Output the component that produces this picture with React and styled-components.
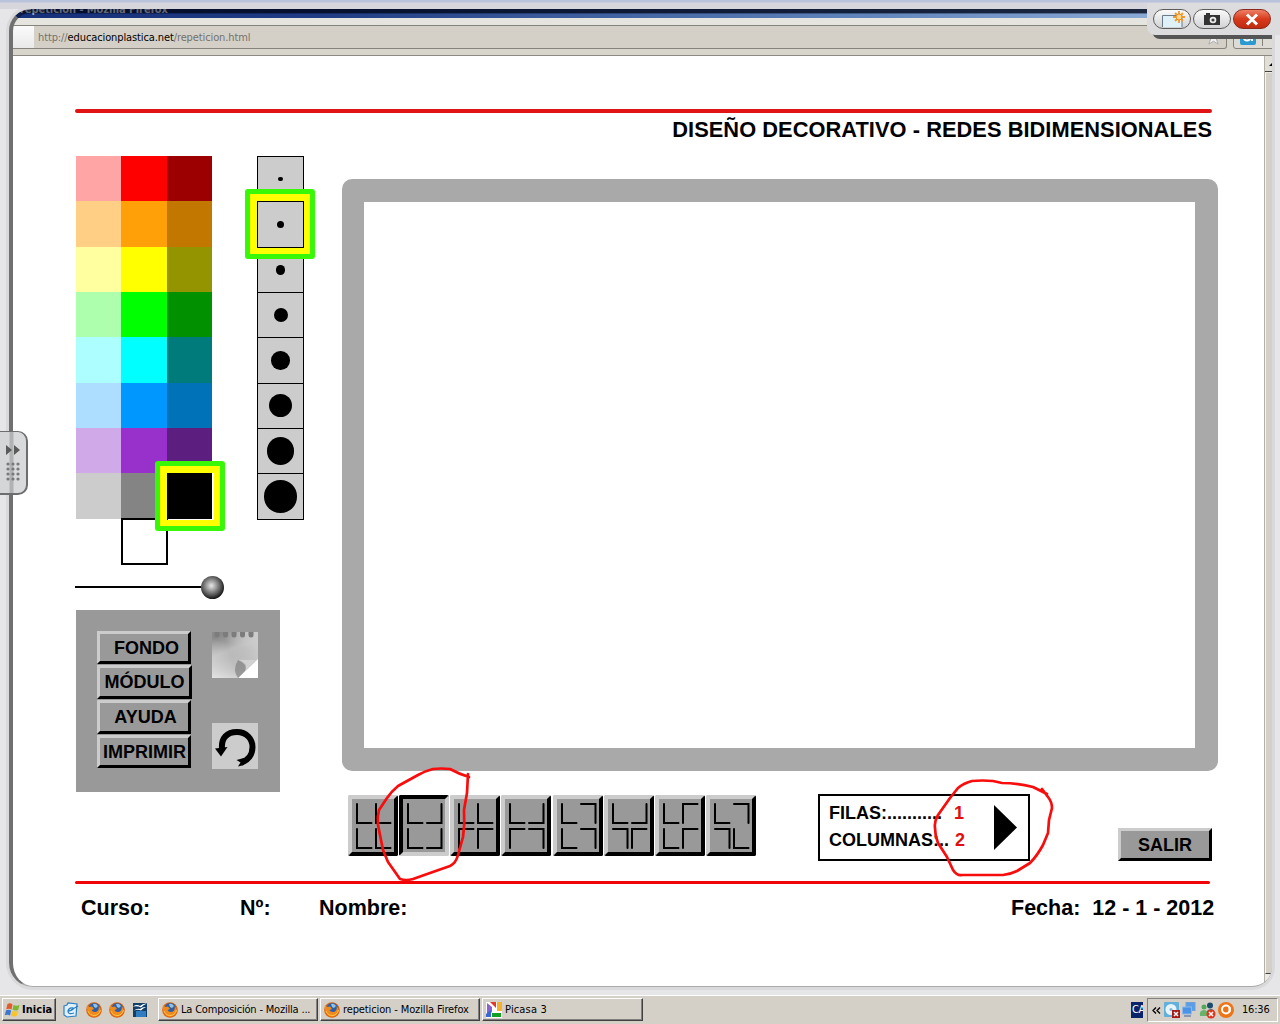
import React from "react";
import styled, { createGlobalStyle } from "styled-components";

const GlobalStyle = createGlobalStyle`
  * {
    box-sizing: border-box;
  }
  body {
    margin: 0;
    width: 1280px;
    height: 1024px;
    overflow: hidden;
    background: #fff;
  }
  button {
    padding: 0;
    margin: 0;
    font: inherit;
  }
`;

const arial = `"Liberation Sans", Arial, sans-serif`;
const tahoma = `"DejaVu Sans Condensed", Tahoma, sans-serif`;

const Desktop = styled.div`
  position: relative;
  display: flex;
  flex-direction: column;
  width: 1280px;
  height: 1024px;
  overflow: hidden;
  background: #fff;
`;

/* ---------- browser ---------- */

const Browser = styled.div`
  position: relative;
  display: flex;
  flex-direction: column;
  height: 995px;
  overflow: hidden;
`;

const TitleBar = styled.div`
  height: 18px;
  flex: none;
  padding-left: 20px;
  background: linear-gradient(rgba(0, 8, 30, 0.65) 0 13px, transparent 14px),
    linear-gradient(90deg, #16307a 0%, #1f3c84 25%, #5c80b8 65%, #9dbbe2 100%);
  color: #a4aaba;
  font: bold 11px/19px ${tahoma};
  letter-spacing: -0.06px;
  white-space: nowrap;
`;

const AddressBar = styled.div`
  display: flex;
  align-items: center;
  flex: none;
  height: 38px;
  padding: 7px 0 7px 13px;
  background: linear-gradient(#e6e4de 0 7px, #d8d5cd 7px);
  border-bottom: 1px solid #8b8982;
`;

const PageTab = styled.div`
  width: 21px;
  height: 24px;
  background: linear-gradient(#fbfbfb, #e9e9e9);
  border-top: 1px solid #85847c;
  border-bottom: 1px solid #85847c;
`;

const UrlField = styled.div`
  display: flex;
  align-items: center;
  justify-content: space-between;
  width: 1193px;
  height: 24px;
  padding: 2px 5px 0 4px;
  background: #d4d0c8;
  border: 1px solid #85847c;
  border-left: 0;
  border-radius: 0 3px 3px 0;
  color: #74726c;
  font: 11px/22px ${tahoma};
  letter-spacing: -0.11px;

  b {
    color: #000;
    font-weight: normal;
  }
`;

const SearchField = styled.div`
  display: flex;
  align-items: center;
  width: 47px;
  height: 24px;
  margin-left: 6px;
  padding-left: 6px;
  background: #dedbd4;
  border: 1px solid #85847c;
  border-radius: 3px;
`;

const Viewport = styled.div`
  display: flex;
  flex: 1;
`;

const Scrollbar = styled.div`
  display: flex;
  flex-direction: column;
  width: 16px;
  height: 931px;
  background: #eceae5;
  border-left: 1px solid #b4b1a9;
`;

const ScrollArrow = styled.div`
  display: flex;
  align-items: center;
  justify-content: center;
  height: 16px;
  background: #e2dfd8;
  border-bottom: 1px solid #404040;
`;

const ScrollThumb = styled.div`
  height: 901px;
  margin-top: 1px;
  background: #d4d0c8;
  border-left: 1px solid #f6f5f2;
  border-bottom: 1px solid #404040;
`;

/* ---------- activity page ---------- */

const Stage = styled.main`
  display: flex;
  flex-direction: column;
  width: 1264px;
  padding: 53px 46px 0 75px;
  font-family: ${arial};
  font-weight: bold;
  color: #000;
`;

const RedLine = styled.hr`
  flex: none;
  width: ${(p) => p.$width}px;
  height: ${(p) => p.$height}px;
  margin: 0;
  border: 0;
  border-radius: 2px;
  background: ${(p) => p.$color};
`;

const Heading = styled.h1`
  width: 1137px;
  height: 43px;
  margin: 0;
  padding-top: 3px;
  font-size: 21.8px;
  line-height: 27px;
  letter-spacing: 0.06px;
  text-align: right;
  white-space: nowrap;
`;

const Workspace = styled.div`
  display: flex;
  height: 725px;
`;

const ToolsColumn = styled.div`
  width: 267px;
  padding-left: 1px;
`;

const Pickers = styled.div`
  display: flex;
  height: 409px;
`;

const Palette = styled.div`
  display: grid;
  grid-template-columns: repeat(3, 45.35px);
  grid-template-rows: repeat(8, 45.35px) 46px;
  width: 181px;
`;

const Swatch = styled.div`
  position: relative;
  background: ${(p) => p.$color};
`;

const WhiteSwatch = styled.div`
  position: relative;
  grid-column: 2;
  width: 47px;
  height: 47px;
  margin: -1px 0 0 -0.6px;
  background: #fff;
  border: 2px solid #000;
`;

const Selection = styled.div`
  position: absolute;
  left: ${(p) => p.$offset}px;
  top: ${(p) => p.$offset}px;
  width: 70px;
  height: 70px;
  border: 5px solid #38f808;
  border-radius: 3px;
  box-shadow: inset 7px 7px #ff0, inset -6px -6px #ff0;
  z-index: 1;
`;

const BrushColumn = styled.div`
  width: 47px;
`;

const Brush = styled.div`
  position: relative;
  display: flex;
  align-items: center;
  justify-content: center;
  width: 47px;
  height: 46.35px;
  margin-bottom: -1px;
  background: #ccc;
  border: 1px solid #000;
`;

const Dot = styled.span`
  width: ${(p) => p.$size}px;
  height: ${(p) => p.$size}px;
  border-radius: 50%;
  background: #000;
`;

const Slider = styled.div`
  display: flex;
  align-items: center;
  height: 45px;
  margin-left: -1px;
  padding-bottom: 1px;
`;

const Track = styled.div`
  width: 126px;
  height: 2px;
  background: #000;
`;

const Knob = styled.div`
  width: 23px;
  height: 23px;
  border-radius: 50%;
  background: radial-gradient(circle at 45% 42%, #e8e8e8 0, #999 28%, #555 52%, #111 74%);
`;

const Panel = styled.div`
  display: flex;
  gap: 20px;
  width: 204px;
  height: 182px;
  padding: 21px 0 0 21px;
  background: #999;
`;

const Stack = styled.div`
  display: flex;
  flex-direction: column;
  gap: 1px;
  width: 95px;
`;

const ToolIcons = styled.div`
  display: flex;
  flex-direction: column;
  gap: 45px;
  padding-top: 1px;
`;

const BevelButton = styled.button`
  width: ${(p) => p.$width || 94}px;
  height: ${(p) => p.$height || 34}px;
  padding-left: ${(p) => p.$indent || 0}px;
  background: #999;
  border: 3px solid;
  border-color: #ccc #000 #000 #ccc;
  font-size: 18px;
  line-height: 26px;
  color: #000;
  text-align: center;
  white-space: nowrap;
`;

const BoardColumn = styled.div`
  display: flex;
  flex-direction: column;
  width: 876px;
  padding-top: 23px;
`;

const Board = styled.div`
  flex: none;
  width: 876px;
  height: 592px;
  background: #fff;
  border: 22px solid #a9a9a9;
  border-top-width: 23px;
  border-right-width: 23px;
  border-bottom-width: 23px;
  border-radius: 10px;
`;

const Controls = styled.div`
  display: flex;
  align-items: flex-start;
  padding: 23px 0 0 6px;
`;

const Patterns = styled.div`
  display: flex;
  gap: 1.15px;
  width: 470px;
  padding-top: 1px;
`;

const PatternButton = styled.button`
  width: 50px;
  height: 61px;
  background: #999;
  border: 4px solid;
  border-color: ${(p) => (p.$pressed ? "#000 #ccc #ccc #000" : "#ccc #000 #000 #ccc")};
  border-radius: 2px;

  svg {
    display: block;
    margin: -4px;
  }
`;

const Counter = styled.div`
  display: flex;
  align-items: center;
  justify-content: space-between;
  width: 212px;
  height: 67px;
  padding: 0 11px 0 9px;
  border: 2px solid #000;
`;

const CounterTable = styled.div`
  display: grid;
  grid-template-columns: 125px 14px;
  row-gap: 1px;
  padding-bottom: 2px;
  font-size: 18px;
  line-height: 26px;
  white-space: nowrap;
`;

const Count = styled.span`
  padding-left: ${(p) => p.$indent || 0}px;
  color: #e01010;
`;

const ExitSlot = styled.div`
  margin-left: 88px;
  padding-top: 34px;
`;

const Footer = styled.footer`
  display: flex;
  padding: 10px 0 0 6px;
  font-size: 21.5px;
  line-height: 28px;
  white-space: pre;
`;

const Field = styled.span`
  width: ${(p) => p.$width}px;
`;

/* ---------- capture frame ---------- */

const Frame = styled.div`
  position: absolute;
  left: 9px;
  top: 9px;
  width: 1263px;
  height: 978px;
  border: 0 solid;
  border-top: 4px solid rgba(0, 4, 20, 0.4);
  border-left: 4px solid #707070;
  border-bottom: 1px solid #aaa;
  border-radius: 22px 4px 20px 24px;
  box-shadow: 0 0 0 3px #d9d9dc, 0 0 0 40px #e6e6e8;
  pointer-events: none;
`;

const FrameTop = styled.div`
  position: absolute;
  left: 0;
  top: 0;
  width: 1280px;
  height: 9px;
  background: linear-gradient(#b9c4dc 0 2px, #d6d6dc 3px);
`;

const CaptureShadow = styled.div`
  position: absolute;
  left: 1152px;
  top: 30px;
  width: 120px;
  height: 9px;
  background: #555;
  border-radius: 0 4px 0 8px;
`;

const CaptureBar = styled.div`
  position: absolute;
  left: 1147px;
  top: 3px;
  display: flex;
  gap: 2px;
  width: 133px;
  height: 32px;
  padding: 6px 0 0 6px;
  background: #dcdcde;
  border-radius: 0 0 0 8px;
`;

const Pill = styled.button`
  display: flex;
  align-items: center;
  justify-content: center;
  width: 38px;
  height: 20px;
  background: ${(p) =>
    p.$danger ? "linear-gradient(#ee8066, #d83a1c 50%, #c02a10)" : "linear-gradient(#fafafa, #d2d2d6)"};
  border: 1px solid ${(p) => (p.$danger ? "#8a2a1c" : "#5c5c5c")};
  border-radius: 10px;
`;

const Handle = styled.div`
  position: absolute;
  left: -2px;
  top: 431px;
  display: flex;
  flex-direction: column;
  align-items: center;
  gap: 7px;
  width: 30px;
  height: 64px;
  padding-top: 13px;
  background: linear-gradient(90deg, #d4d6d7 0 10px, #b0b2b3 11px 14px, #d8dadb 15px);
  border: 1px solid #6c6e70;
  border-width: 1px 2px 2px 1px;
  border-radius: 0 10px 10px 0;
`;

const Ink = styled.svg`
  position: absolute;
  left: 0;
  top: 0;
  pointer-events: none;
`;

/* ---------- taskbar ---------- */

const Taskbar = styled.div`
  display: flex;
  align-items: flex-start;
  height: 29px;
  padding: 2px 2px 0;
  background: #d4d0c8;
  border-top: 1px solid #fff;
  font: 11px/20px ${tahoma};
  color: #000;
  white-space: nowrap;
`;

const StartButton = styled.button`
  display: flex;
  align-items: center;
  gap: 1px;
  width: 54px;
  height: 23px;
  padding-left: 1px;
  background: #d4d0c8;
  border: 1px solid;
  border-color: #fff #404040 #404040 #fff;
  box-shadow: inset -1px -1px #808080;
  font-weight: bold;
  letter-spacing: 0.05px;
`;

const QuickLaunch = styled.div`
  display: flex;
  align-items: center;
  gap: 7px;
  width: 102px;
  height: 23px;
  padding-left: 7px;
`;

const Task = styled.div`
  display: flex;
  align-items: center;
  gap: 3px;
  width: ${(p) => p.$width}px;
  height: 23px;
  margin-right: 2px;
  padding-left: 3px;
  border: 1px solid;
  border-color: #fff #404040 #404040 #fff;
  box-shadow: inset -1px -1px #808080;
  letter-spacing: ${(p) => p.$spacing}px;
`;

const Language = styled.div`
  width: 12px;
  height: 16px;
  margin: 4px 4px 0 auto;
  padding-left: 1px;
  overflow: hidden;
  background: #0a246a;
  color: #fff;
  line-height: 16px;
  letter-spacing: -0.5px;
`;

const Tray = styled.div`
  display: flex;
  align-items: center;
  gap: 2px;
  width: 131px;
  height: 24px;
  padding-left: 4px;
  border: 1px solid;
  border-color: #808080 #fff #fff #808080;
`;

const Clock = styled.span`
  margin-left: 5px;
  letter-spacing: -0.2px;
`;

const colors = [
  "#ffa5a5", "#ff0000", "#9c0000",
  "#ffcf85", "#ffa008", "#c27800",
  "#ffffa0", "#ffff00", "#949400",
  "#adffad", "#00ff00", "#009000",
  "#adffff", "#00ffff", "#007b7b",
  "#addeff", "#0098ff", "#0073b8",
  "#d0a9e8", "#9830cc", "#5c1f80",
  "#cccccc", "#848484", "#000000",
];

const brushes = [4.5, 7, 9.5, 14, 18.5, 23, 27.5, 32.5];

// four corners per pattern, reading order; each name is the place of the angle
const patterns = [
  ["bl", "bl", "bl", "bl"],
  ["bl", "br", "bl", "br"],
  ["bl", "bl", "tl", "tl"],
  ["bl", "br", "tl", "tr"],
  ["bl", "tr", "bl", "tr"],
  ["bl", "br", "tr", "tl"],
  ["bl", "tl", "bl", "tl"],
  ["bl", "tr", "tr", "bl"],
];

const corners = {
  bl: "M0 0V19H14.5",
  br: "M14.5 0V19H0",
  tl: "M0 19V0H14.5",
  tr: "M14.5 19V0H0",
};

const cells = [
  [9, 9],
  [28, 9],
  [9, 34],
  [28, 34],
];

function PatternIcon({ pattern }) {
  return (
    <svg width="50" height="61" fill="none" stroke="#000" strokeWidth="2" strokeLinecap="round">
      {pattern.map((corner, i) => (
        <path key={i} d={corners[corner]} transform={`translate(${cells[i][0]} ${cells[i][1]})`} />
      ))}
    </svg>
  );
}

function NotebookIcon() {
  return (
    <svg width="46" height="46" viewBox="0 0 46 46">
      <defs>
        <linearGradient id="sheet" x1="0.35" y1="0" x2="0.75" y2="1">
          <stop offset="0" stopColor="#8a8a8a" />
          <stop offset="0.35" stopColor="#b0b0b0" />
          <stop offset="0.8" stopColor="#858585" />
        </linearGradient>
        <linearGradient id="low" x1="0.3" y1="0" x2="0" y2="1">
          <stop offset="0.2" stopColor="#eee" stopOpacity="0" />
          <stop offset="1" stopColor="#e4e4e4" />
        </linearGradient>
        <linearGradient id="side" x1="0.4" y1="0.5" x2="1" y2="0.3">
          <stop offset="0" stopColor="#ddd" stopOpacity="0" />
          <stop offset="1" stopColor="#ccc" />
        </linearGradient>
      </defs>
      <path d="M0 0H46V28L26 46H0Z" fill="url(#sheet)" />
      <path d="M0 0H46V28L26 46H0Z" fill="url(#low)" />
      <path d="M0 0H46V28L26 46H0Z" fill="url(#side)" />
      {[5, 13.500, 22, 30.500, 39].map((x) => (
        <path key={x} d={`M${x - 2.5} 0V3A2.5 2.5 0 0 0 ${x + 2.5} 3V0Z`} fill="#7c7c7c" />
      ))}
      <path d="M26 46L46 27V46Z" fill="#fff" />
      <path d="M26 28Q36 30 34 38L44 28Z" fill="#d2d2d2" />
      <path d="M26 28Q36 32 33 39L26 46Q20 38 26 28Z" fill="#777" opacity="0.6" />
    </svg>
  );
}

function UndoIcon() {
  return (
    <svg width="46" height="46" viewBox="0 0 46 46">
      <rect width="46" height="46" fill="#ccc" />
      <path d="M10 26C9 15 15 9 25 9C34.500 9 40.500 16 40.500 24C40.500 32 36 37.500 29 39.500" fill="none" stroke="#000" strokeWidth="6" />
      <path d="M3 25.500L15.500 24L9 33.500Z" />
      <path d="M24.500 37L32 35L32 42L26 43.500L28.500 39.500Z" />
    </svg>
  );
}

function FirefoxIcon() {
  return (
    <svg width="16" height="16" viewBox="0 0 16 16">
      <circle cx="8" cy="8" r="7.800" fill="#d9620c" />
      <circle cx="8.300" cy="6.500" r="5.600" fill="#2d5fa8" />
      <path d="M7 2Q10 1 12 4L10 6L8 5Z" fill="#8fc4e8" />
      <path d="M1 3L3 5L6 4.500L8 7L5.500 8Q7 11 11 9.500Q13.500 8 12.500 4Q17 9 12.500 13Q8 16.500 3.500 13Q0 9 1 3Z" fill="#f08a1c" />
      <path d="M2 9Q4 14 9 13.500Q13 13 14.500 8" fill="none" stroke="#fbc24a" strokeWidth="1" />
    </svg>
  );
}

function WindowsIcon() {
  return (
    <svg width="17" height="16" viewBox="0 0 16 16">
      <path d="M3 2Q6 .5 8 2.500L7 7.500Q4.500 6 1.700 7.200Z" fill="#e8592a" />
      <path d="M9 3Q12 4.500 15 3L13.700 8Q11 9.200 8 7.800Z" fill="#7cb82f" />
      <path d="M1.500 8.200Q4.500 7 6.700 8.500L5.500 13.500Q3 12 .3 13.200Z" fill="#3a78d8" />
      <path d="M7.700 8.800Q10.500 10 13.500 9L12.200 14Q9.500 15.200 6.500 13.800Z" fill="#f6c42c" />
    </svg>
  );
}

function DesktopIcon() {
  return (
    <svg width="16" height="16" viewBox="0 0 16 16">
      <path d="M1 4L4 3L5 1L14 2L13 14L4 15L1 13Z" fill="#e4f1fb" stroke="#2a80c4" strokeWidth="1.200" />
      <path d="M11 11Q5 13 5 9Q6 5 10 6Q11 8 5.500 9" fill="none" stroke="#2a80c4" strokeWidth="1.300" />
      <path d="M8 8L15 4" stroke="#2a80c4" strokeWidth="1.300" />
    </svg>
  );
}

function WriterIcon() {
  return (
    <svg width="16" height="16" viewBox="0 0 16 16">
      <path d="M1 1H15V15H1Z" fill="#123f68" />
      <path d="M4 9H14V15H4Z" fill="#2f7cc0" />
      <path d="M1 4.500Q5 2 8 4Q11 1 15 1.500Q11 3 9 5.500Q6 3.500 1 4.500ZM2 8.500Q5 6 8 7Q11 4.500 14 5Q11 6 9 8.500Q6 7 2 8.500Z" fill="#fff" />
    </svg>
  );
}

function PicasaIcon() {
  return (
    <svg width="16" height="16" viewBox="0 0 16 16">
      <rect width="16" height="16" fill="#fff" />
      <path d="M1 1L6 5V10L1 14Z" fill="#8a62d0" />
      <path d="M4 0H10V6Z" fill="#e23a2a" />
      <path d="M11 0H16V9H11Z" fill="#f6b02c" />
      <path d="M6 11H15V15H6Z" fill="#14a024" />
      <path d="M0 15V12L5 8V15Z" fill="#3868d0" />
    </svg>
  );
}

function TrayIcons() {
  return (
    <svg width="72" height="18" viewBox="0 0 72 18">
      <rect x="1" y="1" width="15" height="15" rx="1" fill="#62b0dc" />
      <circle cx="8" cy="8.500" r="5.500" fill="#e8f4fa" />
      <circle cx="8" cy="8.500" r="1.500" fill="#77b4d4" />
      <path d="M9 9H17V17H9Z" fill="#a81818" />
      <path d="M11 11L15 15M15 11L11 15" stroke="#fff" strokeWidth="1.500" />
      <rect x="23" y="1.500" width="9" height="8" fill="#5a9ee8" stroke="#6f9fd8" />
      <rect x="19.500" y="6" width="9" height="7" fill="#4a94e8" stroke="#8fb8e4" />
      <path d="M21 14H28V16H21Z" fill="#8898b4" />
      <circle cx="47" cy="4.500" r="3" fill="#1c4c6c" />
      <path d="M43 15Q43 8 48 8Q52 8 52 14Z" fill="#287098" />
      <circle cx="41" cy="6" r="2.500" fill="#52a858" />
      <path d="M37 15Q36 9 41 9Q45 9 45 15Z" fill="#64b46a" />
      <circle cx="48" cy="13" r="4.500" fill="#dc3820" />
      <path d="M46 11L50 15M50 11L46 15" stroke="#fff" strokeWidth="1.500" />
      <circle cx="63" cy="9" r="8" fill="#ee7516" />
      <circle cx="63" cy="8.500" r="4" fill="none" stroke="#fff" strokeWidth="2" />
      <path d="M66.500 6V11" stroke="#fff" strokeWidth="2" />
    </svg>
  );
}

function App() {
  return (
    <Desktop>
      <GlobalStyle />
      <Browser>
        <TitleBar>repeticion - Mozilla Firefox</TitleBar>
        <AddressBar>
          <PageTab />
          <UrlField>
            <span>
              http://<b>educacionplastica.net</b>/repeticion.html
            </span>
            <svg width="15" height="15" viewBox="0 0 16 16">
              <path d="M8 1L10 6L15 6L11 9.500L13 15L8 12L3 15L5 9.500L1 6L6 6Z" fill="#f2f2f2" stroke="#aaa" />
            </svg>
          </UrlField>
          <SearchField>
            <svg width="36" height="18" viewBox="0 0 36 18">
              <rect width="16" height="16" y="1" rx="2" fill="#2a9ad0" />
              <circle cx="7" cy="9" r="3.500" fill="none" stroke="#fff" strokeWidth="2" />
              <path d="M12 4V13" stroke="#fff" strokeWidth="2" />
              <path d="M22.500 0V18" stroke="#85847c" />
              <path d="M27 4H33L30 7Z" />
            </svg>
          </SearchField>
        </AddressBar>
        <Viewport>
          <Stage>
            <RedLine $width={1137} $height={4} $color="#e01414" />
            <Heading>DISEÑO DECORATIVO - REDES BIDIMENSIONALES</Heading>
            <Workspace>
              <ToolsColumn>
                <Pickers>
                  <Palette>
                    {colors.map((c, i) => (
                      <Swatch key={c} $color={c}>
                        {i === 23 && <Selection $offset={-12} />}
                      </Swatch>
                    ))}
                    <WhiteSwatch />
                  </Palette>
                  <BrushColumn>
                    {brushes.map((size, i) => (
                      <Brush key={size}>
                        <Dot $size={size} />
                        {i === 1 && <Selection $offset={-13} />}
                      </Brush>
                    ))}
                  </BrushColumn>
                </Pickers>
                <Slider>
                  <Track />
                  <Knob />
                </Slider>
                <Panel>
                  <Stack>
                    <BevelButton $height={33} $indent={5}>FONDO</BevelButton>
                    <BevelButton $width={95}>MÓDULO</BevelButton>
                    <BevelButton $indent={3}>AYUDA</BevelButton>
                    <BevelButton $height={33} $indent={1}>IMPRIMIR</BevelButton>
                  </Stack>
                  <ToolIcons>
                    <NotebookIcon />
                    <UndoIcon />
                  </ToolIcons>
                </Panel>
              </ToolsColumn>
              <BoardColumn>
                <Board />
                <Controls>
                  <Patterns>
                    {patterns.map((pattern, i) => (
                      <PatternButton key={i} $pressed={i === 1}>
                        <PatternIcon pattern={pattern} />
                      </PatternButton>
                    ))}
                  </Patterns>
                  <Counter>
                    <CounterTable>
                      <span>FILAS:...........</span>
                      <Count>1</Count>
                      <span>COLUMNAS:..</span>
                      <Count $indent={1}>2</Count>
                    </CounterTable>
                    <svg width="23" height="45">
                      <path d="M0 0L23 22.500L0 45Z" />
                    </svg>
                  </Counter>
                  <ExitSlot>
                    <BevelButton $height={33}>SALIR</BevelButton>
                  </ExitSlot>
                </Controls>
              </BoardColumn>
            </Workspace>
            <RedLine $width={1135} $height={3} $color="#f00408" />
            <Footer>
              <Field $width={159}>Curso:</Field>
              <Field $width={79}>Nº:</Field>
              <Field $width={692}>Nombre:</Field>
              <Field>Fecha:  12 - 1 - 2012</Field>
            </Footer>
          </Stage>
          <Scrollbar>
            <ScrollArrow>
              <svg width="8" height="4">
                <path d="M0 4L4 0L8 4Z" />
              </svg>
            </ScrollArrow>
            <ScrollThumb />
          </Scrollbar>
        </Viewport>
        <Frame />
        <FrameTop />
        <CaptureShadow />
        <CaptureBar>
          <Pill>
            <svg width="28" height="18" viewBox="0 0 28 18">
              <path d="M4.500 17V5.500H24V17" fill="#dff1f8" stroke="#6a7a88" />
              <path d="M21 1V13M15 7H27M17 3L25 11M25 3L17 11" stroke="#f09a30" strokeWidth="1.800" />
              <circle cx="21" cy="7" r="3" fill="#ffd98a" stroke="#ee8a20" />
            </svg>
          </Pill>
          <Pill>
            <svg width="16" height="12" viewBox="0 0 16 12">
              <path d="M0 2H2V0H6V2H16V12H0Z" fill="#333" />
              <circle cx="9" cy="7" r="3.300" fill="#eee" />
              <circle cx="9" cy="7" r="1.600" fill="#444" />
            </svg>
          </Pill>
          <Pill $danger>
            <svg width="14" height="13" viewBox="0 0 14 13">
              <path d="M2 1.500L12 11.500M12 1.500L2 11.500" stroke="#fff" strokeWidth="3" />
            </svg>
          </Pill>
        </CaptureBar>
        <Handle>
          <svg width="14" height="10">
            <path d="M0 0L6 5L0 10ZM8 0L14 5L8 10Z" fill="#5a5a5a" />
          </svg>
          <svg width="14" height="19" fill="#77797a">
            {[0, 1, 2, 3].map((row) =>
              [0, 1, 2].map((col) => (
                <circle key={`${row}${col}`} cx={2 + col * 5} cy={2 + row * 5} r="1.600" />
              ))
            )}
          </svg>
        </Handle>
        <Ink width="1280" height="995" fill="none" stroke="#f80c0c" strokeWidth="2.700" strokeLinecap="round" strokeLinejoin="round">
          <path d="M469 777Q459 774 450 769Q441 768 433 769Q425 771 418 775L398 786Q391 792 387 798L379 810Q377 817 378 825L383 850L388 862L400 879Q406 881 413 879L430 873L450 866Q456 863 458 855L463 837Q465 824 464 810L467 793L468 774" />
          <path d="M1047 794L1033 787Q1018 783 1002 783L993 781Q982 780 972 781Q964 783 958 788L950 798L938 815Q934 822 935 828Q935 836 938 843L947 857L953 870Q957 876 962 875H1003Q1011 874 1017 871L1030 863Q1037 856 1043 845L1048 833L1049 820L1052 808Q1052 802 1048 797L1042 789" />
        </Ink>
      </Browser>
      <Taskbar>
        <StartButton>
          <WindowsIcon />
          Inicia
        </StartButton>
        <QuickLaunch>
          <DesktopIcon />
          <FirefoxIcon />
          <FirefoxIcon />
          <WriterIcon />
        </QuickLaunch>
        <Task $width={160} $spacing={-0.19}>
          <FirefoxIcon />
          La Composición - Mozilla ...
        </Task>
        <Task $width={160} $spacing={-0.12}>
          <FirefoxIcon />
          repeticion - Mozilla Firefox
        </Task>
        <Task $width={161} $spacing={0.15}>
          <PicasaIcon />
          Picasa 3
        </Task>
        <Language>CA</Language>
        <Tray>
          <svg width="9" height="7" fill="none" stroke="#000" strokeWidth="1.300">
            <path d="M4 .5L1 3.500L4 6.500M8 .5L5 3.500L8 6.500" />
          </svg>
          <TrayIcons />
          <Clock>16:36</Clock>
        </Tray>
      </Taskbar>
    </Desktop>
  );
}

export default App;
